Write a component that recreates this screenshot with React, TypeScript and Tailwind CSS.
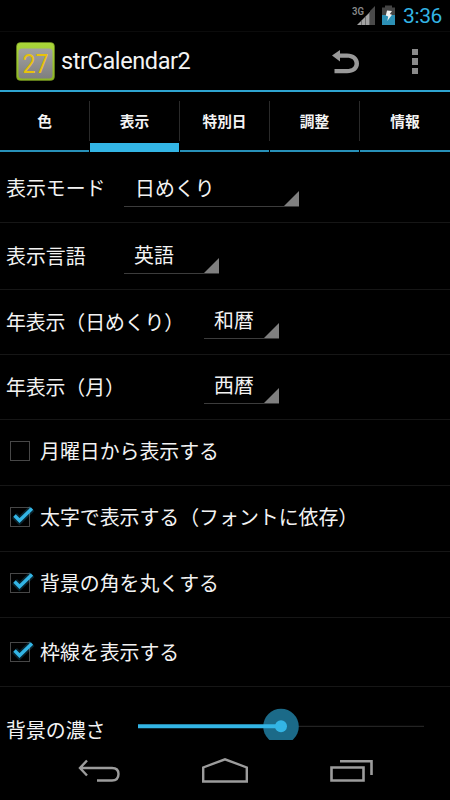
import { useState } from 'react';
import clsx from 'clsx';

const TABS = ['色', '表示', '特別日', '調整', '情報'];

const SPINNERS = [
  { label: '表示モード', value: '日めくり', row: 'h-[71px]', text: 'w-[124px] pt-px', box: 'w-[175px] pl-[11px] mt-[3px]' },
  { label: '表示言語', value: '英語', row: 'h-[67px]', text: 'w-[124px]', box: 'w-[95px] pl-[10px] mt-[-1px]' },
  { label: '年表示（日めくり）', value: '和暦', row: 'h-[65px] pb-px', text: 'w-[204px] tracking-[-0.1px]', box: 'w-[75px] pl-[10px] mt-[-1px]' },
  { label: '年表示（月）', value: '西暦', row: 'h-[65px] pb-px', text: 'w-[204px] tracking-[-0.1px]', box: 'w-[75px] pl-[10px] mt-[-1px]' },
];

const CHECKS = [
  { label: '月曜日から表示する', on: false, row: 'h-[66px] pb-[3px]' },
  { label: '太字で表示する（フォントに依存）', on: true, row: 'h-[66px] pb-[3px]' },
  { label: '背景の角を丸くする', on: true, row: 'h-[66px] pb-[3px]' },
  { label: '枠線を表示する', on: true, row: 'h-[69px]' },
];

function StatusBar() {
  return (
    <div className="flex h-8 shrink-0 items-center justify-end border-b border-[#0b0b0b] pr-2">
      <svg className="h-8 w-[46px]" viewBox="0 0 46 32">
        <text x="0" y="14.500" fill="#8a8a8a" fontSize="11" fontWeight="600" fontFamily="Roboto, sans-serif" textLength="12" lengthAdjust="spacingAndGlyphs">3G</text>
        <path d="M5 25 L18 12 V25Z" fill="#a3a3a3" />
        <path d="M18 25 V11 L23 6 V25Z" fill="#4a4a4a" />
        <path d="M9.500 20 V25 M13.500 16 V25 M17.500 12 V25" stroke="#555" strokeWidth="0.7" />
        <path d="M30 7.500 H33 V5.500 H40 V7.500 H43 V15 H30Z" fill="#444" />
        <path d="M30 15 H43 V25 H30Z" fill="#2c90b5" />
        <path d="M35 10.500 L40 11 L37.800 14 L40 14.700 L35.300 21 L36.200 16.500 L33.800 15.500Z" fill="#f2f2f2" />
      </svg>
      <span className="ml-[5px] font-['Roboto',sans-serif] text-[21px] leading-8 tracking-[-0.4px] text-[#33b5e5]">3:36</span>
    </div>
  );
}

function ActionBar() {
  return (
    <div className="flex h-[60px] shrink-0 items-center border-b-2 border-[#2ea4d0] pt-px">
      <svg className="ml-4 h-10 w-[39px]" viewBox="0 0 39 40">
        <defs>
          <linearGradient id="tile" x1="0" y1="0" x2="0" y2="1">
            <stop offset="0" stopColor="#a2a2a2" />
            <stop offset="1" stopColor="#7f7f7f" />
          </linearGradient>
          <linearGradient id="frame" x1="0" y1="0" x2="0" y2="1">
            <stop offset="0" stopColor="#aad63a" />
            <stop offset="1" stopColor="#8db523" />
          </linearGradient>
        </defs>
        <rect x="0.500" y="0.500" width="38" height="38" rx="4" fill="url(#frame)" stroke="#6f8f20" strokeWidth="0.6" />
        <rect x="2.500" y="6.500" width="34" height="30" rx="3.500" fill="url(#tile)" />
        <text x="19.500" y="30.500" textAnchor="middle" fill="#e8c20c" fontSize="25" fontFamily="Roboto, sans-serif" textLength="26" lengthAdjust="spacingAndGlyphs">27</text>
      </svg>
      <h1 className="ml-[6px] flex-1 pt-px font-['Roboto',sans-serif] text-[23.500px] tracking-[-0.4px] text-[#f3f3f3]">strCalendar2</h1>
      <button aria-label="戻す" className="mr-[51px]">
        <svg className="h-6 w-7" viewBox="0 0 28 24">
          <path d="M0 5.500 L8 0 V3.500 H15 C22 3.500 27 7.500 27 13.500 C27 19.500 22 23.300 15 23.300 H2.500 V19 H15 C20 19 22.500 16.800 22.500 13.500 C22.500 10 20 7.700 15 7.700 H8 V11.500Z" fill="#999" />
        </svg>
      </button>
      <button aria-label="メニュー" className="mr-[31px] flex flex-col gap-[3px] px-px">
        <span className="h-[6.500px] w-[6.500px] bg-[#8a8a8a]" />
        <span className="h-[6.500px] w-[6.500px] bg-[#8a8a8a]" />
        <span className="h-[6.500px] w-[6.500px] bg-[#8a8a8a]" />
      </button>
    </div>
  );
}

function NavBar() {
  return (
    <nav className="flex h-[60px] shrink-0 items-center justify-center gap-[82px] bg-black">
      <svg className="h-6 w-[42px]" viewBox="0 0 42 24" fill="none" stroke="#9c9c9c" strokeWidth="2.4">
        <path d="M9 2.500 L2 10 L9 17.500 M2 10 H34 C38.500 10 40.500 12 40.500 16 C40.500 20.500 38.500 22.500 34 22.500 H19" />
      </svg>
      <svg className="h-7 w-[46px]" viewBox="0 0 46 28" fill="none" stroke="#9c9c9c" strokeWidth="2.4">
        <path d="M1.200 25.500 V11.500 L23 3.300 L44.800 11.500 V25.500Z" />
      </svg>
      <svg className="h-6 w-[43px]" viewBox="0 0 43 24" fill="none" stroke="#9c9c9c" strokeWidth="2.6">
        <path d="M1.500 9.500 H33.500 V22.500 H1.500Z M10 3.300 H41.500 V17" />
      </svg>
    </nav>
  );
}

export default function App() {
  const [tab, setTab] = useState(1);
  const [checks, setChecks] = useState(CHECKS.map((c) => c.on));

  return (
    <div className="flex h-[800px] w-[450px] flex-col overflow-hidden bg-black font-['Noto_Sans_CJK_JP',sans-serif] text-[#f3f3f3]">
      <StatusBar />
      <ActionBar />

      {/* Tabs */}
      <div className="flex h-[60px] shrink-0 items-stretch">
        {TABS.map((name, i) => (
          <button
            key={name}
            onClick={() => setTab(i)}
            className="flex flex-1 flex-col"
          >
            <span className="flex w-full flex-1 items-start pt-[9px]">
              <span className="flex h-10 flex-1 items-center justify-center text-[14.700px] font-bold leading-none">{name}</span>
              {i < TABS.length - 1 && <span className="h-10 w-px bg-[#2a2a2a]" />}
            </span>
            <span className={clsx(i === TABS.length - 1 ? 'w-full' : 'w-[89px]', tab === i ? 'h-[9px] bg-[#33b5e5]' : 'h-[2px] bg-[#2790b8]')} />
          </button>
        ))}
      </div>

      {/* Settings */}
      <main className="flex-1 overflow-hidden text-[19.900px] leading-none">
        {SPINNERS.map((s) => (
          <div key={s.label} className={clsx('flex items-center border-b border-[#161616]', s.row)}>
            <span className={clsx('pl-[6px] whitespace-nowrap', s.text)}>{s.label}</span>
            <button className={clsx('flex h-[36px] items-start justify-between border-b border-[#3c3c3c]', s.box)}>
              <span className="pt-[7px]">{s.value}</span>
              <svg className="size-[15px] self-end" viewBox="0 0 15 15">
                <path d="M15 0 V15 H0Z" fill="#7f7f7f" />
              </svg>
            </button>
          </div>
        ))}

        {CHECKS.map((c, i) => (
          <button
            key={c.label}
            onClick={() => setChecks((prev) => prev.map((v, n) => (n === i ? !v : v)))}
            className={clsx('flex w-full items-center border-b border-[#161616] pl-[10px]', c.row)}
          >
            <svg className="size-5 overflow-visible" viewBox="0 0 20 20" fill="none">
              <rect x="0.500" y="0.500" width="19" height="19" stroke="#474747" />
              {checks[i] && (
                <>
                  <path d="M4.500 8.500 L9.500 13.500 L22 1.500" stroke="#33b5e5" strokeOpacity="0.2" strokeWidth="7" />
                  <path d="M4.500 8.500 L9.500 13.500 L22 1.500" stroke="#33b5e5" strokeWidth="3.4" />
                </>
              )}
            </svg>
            <span className="ml-[10px] whitespace-nowrap">{c.label}</span>
          </button>
        ))}

        <div className="flex h-[53px] items-start">
          <span className="w-[120px] pt-[33px] pl-[6px]">背景の濃さ</span>
          <svg className="mt-[19px] h-[34px] w-[310px]" viewBox="0 0 310 34">
            <path d="M161 20.300 H304" stroke="#232323" strokeWidth="1.3" />
            <circle cx="161" cy="20.500" r="17.800" fill="#1b6a88" />
            <path d="M18 20.300 H161" stroke="#33b5e5" strokeWidth="4" />
            <circle cx="161" cy="20.300" r="6" fill="#33b5e5" />
          </svg>
        </div>
      </main>

      <NavBar />
    </div>
  );
}
